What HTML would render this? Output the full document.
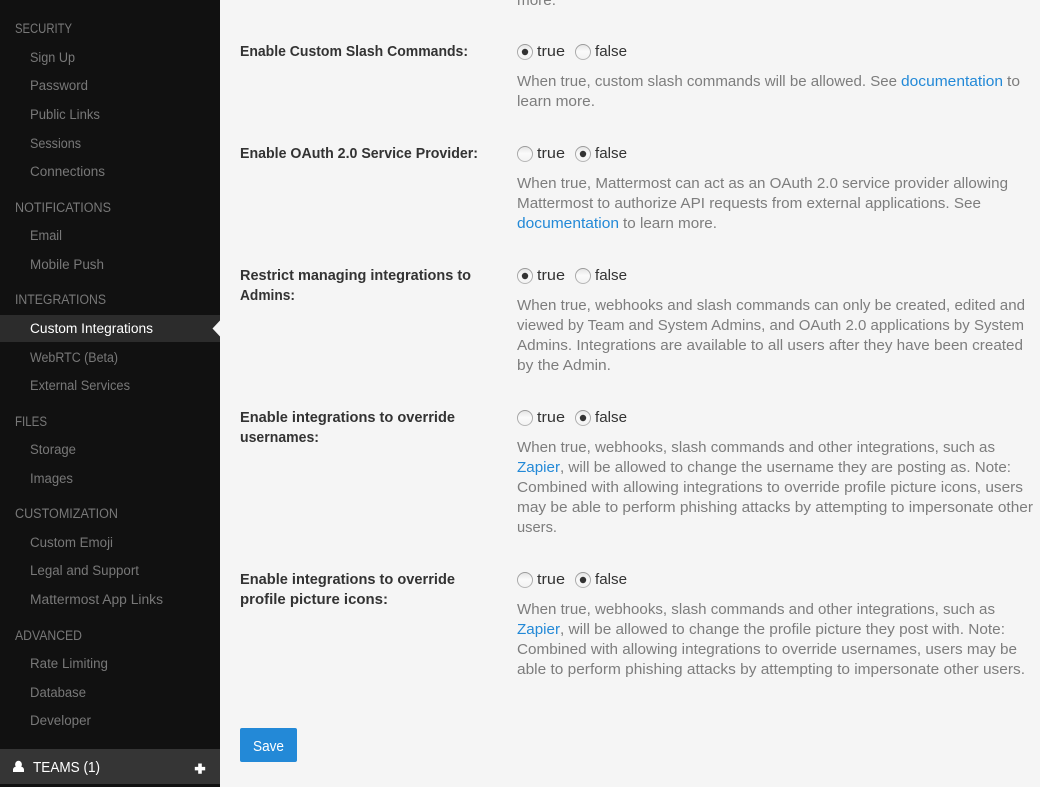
<!DOCTYPE html>
<html><head><meta charset="utf-8"><style>
html,body{margin:0;padding:0;width:1040px;height:787px;overflow:hidden;background:#f5f5f5}
svg{display:block}
text{font-family:"Liberation Sans",sans-serif;font-size:14.5px;white-space:pre}
.h{fill:#787878;font-size:13.5px}.i{fill:#787878;font-size:13.5px}
.l{fill:#333;font-weight:700;font-size:14.3px}.d{fill:#7d7d7d}.r{fill:#333;font-size:15px}.a{fill:#2389d7}
</style></head><body>
<svg width="1040" height="787" viewBox="0 0 1040 787" xmlns="http://www.w3.org/2000/svg">
<defs><linearGradient id="g" x1="0" y1="0" x2="0" y2="1"><stop offset="0" stop-color="#e4e4e4"/><stop offset=".45" stop-color="#fafafa"/><stop offset="1" stop-color="#f2f2f2"/></linearGradient>
<linearGradient id="s" x1="0" y1="0" x2="0" y2="1"><stop offset="0" stop-color="#9a9a9a"/><stop offset="1" stop-color="#b8b8b8"/></linearGradient></defs>
<rect width="1040" height="787" fill="#f5f5f5"/>
<rect width="220" height="787" fill="#111"/>
<rect y="315" width="220" height="27" fill="#2c2c2c"/>
<path d="M220 320.500L212.500 328.500L220 336.500Z" fill="#f5f5f5"/>
<rect y="749" width="220" height="35" fill="#353535"/>
<text class="h" lengthAdjust="spacingAndGlyphs" x="15" y="33" textLength="57">SECURITY</text>
<text class="i" lengthAdjust="spacingAndGlyphs" x="30" y="62" textLength="45">Sign Up</text>
<text class="i" lengthAdjust="spacingAndGlyphs" x="30" y="90" textLength="58">Password</text>
<text class="i" lengthAdjust="spacingAndGlyphs" x="30" y="119" textLength="70">Public Links</text>
<text class="i" lengthAdjust="spacingAndGlyphs" x="30" y="148" textLength="51">Sessions</text>
<text class="i" lengthAdjust="spacingAndGlyphs" x="30" y="176" textLength="75">Connections</text>
<text class="h" lengthAdjust="spacingAndGlyphs" x="15" y="212" textLength="96">NOTIFICATIONS</text>
<text class="i" lengthAdjust="spacingAndGlyphs" x="30" y="240" textLength="32">Email</text>
<text class="i" lengthAdjust="spacingAndGlyphs" x="30" y="269" textLength="74">Mobile Push</text>
<text class="h" lengthAdjust="spacingAndGlyphs" x="15" y="304" textLength="91">INTEGRATIONS</text>
<text class="i" lengthAdjust="spacingAndGlyphs" x="30" y="333" textLength="123" style="fill:#fff">Custom Integrations</text>
<text class="i" lengthAdjust="spacingAndGlyphs" x="30" y="362" textLength="88">WebRTC (Beta)</text>
<text class="i" lengthAdjust="spacingAndGlyphs" x="30" y="390" textLength="100">External Services</text>
<text class="h" lengthAdjust="spacingAndGlyphs" x="15" y="426" textLength="32">FILES</text>
<text class="i" lengthAdjust="spacingAndGlyphs" x="30" y="454" textLength="46">Storage</text>
<text class="i" lengthAdjust="spacingAndGlyphs" x="30" y="483" textLength="43">Images</text>
<text class="h" lengthAdjust="spacingAndGlyphs" x="15" y="518" textLength="103">CUSTOMIZATION</text>
<text class="i" lengthAdjust="spacingAndGlyphs" x="30" y="547" textLength="83">Custom Emoji</text>
<text class="i" lengthAdjust="spacingAndGlyphs" x="30" y="575" textLength="109">Legal and Support</text>
<text class="i" lengthAdjust="spacingAndGlyphs" x="30" y="604" textLength="133">Mattermost App Links</text>
<text class="h" lengthAdjust="spacingAndGlyphs" x="15" y="640" textLength="67">ADVANCED</text>
<text class="i" lengthAdjust="spacingAndGlyphs" x="30" y="668" textLength="78">Rate Limiting</text>
<text class="i" lengthAdjust="spacingAndGlyphs" x="30" y="697" textLength="56">Database</text>
<text class="i" lengthAdjust="spacingAndGlyphs" x="30" y="725" textLength="61">Developer</text>
<ellipse cx="18.500" cy="764.500" rx="3.400" ry="3.800" fill="#fff"/>
<path d="M13 772v-2.300c0-1.700 1.200-2.800 3.200-3.100 1.300 1 3.300 1 4.600 0 2 .3 3.200 1.400 3.200 3.100V772z" fill="#fff"/>
<text lengthAdjust="spacingAndGlyphs" x="33" y="772" textLength="67" style="fill:#fff;font-size:14.500px">TEAMS (1)</text>
<path d="M198.200 763.500h3.600v3.400h3.400v3.500h-3.400v3.400h-3.600v-3.400h-3.400v-3.500h3.400z" fill="#fff"/>

<text class="d" lengthAdjust="spacingAndGlyphs" x="517" y="5" textLength="39">more.</text>

<text class="l" lengthAdjust="spacingAndGlyphs" x="240" y="56" textLength="228">Enable Custom Slash Commands:</text>
<circle cx="525" cy="52" r="7.500" fill="url(#g)" stroke="url(#s)"/><circle cx="525" cy="52" r="3.200" fill="#333"/>
<text class="r" lengthAdjust="spacingAndGlyphs" x="537" y="56" textLength="28">true</text>
<circle cx="583" cy="52" r="7.500" fill="url(#g)" stroke="url(#s)"/>
<text class="r" lengthAdjust="spacingAndGlyphs" x="595" y="56" textLength="32">false</text>
<text class="d" lengthAdjust="spacingAndGlyphs" x="517" y="86" textLength="380">When true, custom slash commands will be allowed. See</text>
<text class="a" lengthAdjust="spacingAndGlyphs" x="901" y="86" textLength="102">documentation</text>
<text class="d" lengthAdjust="spacingAndGlyphs" x="1007" y="86" textLength="13">to</text>
<text class="d" lengthAdjust="spacingAndGlyphs" x="517" y="106" textLength="78">learn more.</text>

<text class="l" lengthAdjust="spacingAndGlyphs" x="240" y="158" textLength="238">Enable OAuth 2.0 Service Provider:</text>
<circle cx="525" cy="154" r="7.500" fill="url(#g)" stroke="url(#s)"/>
<text class="r" lengthAdjust="spacingAndGlyphs" x="537" y="158" textLength="28">true</text>
<circle cx="583" cy="154" r="7.500" fill="url(#g)" stroke="url(#s)"/><circle cx="583" cy="154" r="3.200" fill="#333"/>
<text class="r" lengthAdjust="spacingAndGlyphs" x="595" y="158" textLength="32">false</text>
<text class="d" lengthAdjust="spacingAndGlyphs" x="517" y="188" textLength="491">When true, Mattermost can act as an OAuth 2.0 service provider allowing</text>
<text class="d" lengthAdjust="spacingAndGlyphs" x="517" y="208" textLength="464">Mattermost to authorize API requests from external applications. See</text>
<text class="a" lengthAdjust="spacingAndGlyphs" x="517" y="228" textLength="102">documentation</text>
<text class="d" lengthAdjust="spacingAndGlyphs" x="623" y="228" textLength="94">to learn more.</text>

<text class="l" lengthAdjust="spacingAndGlyphs" x="240" y="280" textLength="231">Restrict managing integrations to</text>
<text class="l" lengthAdjust="spacingAndGlyphs" x="240" y="300" textLength="55">Admins:</text>
<circle cx="525" cy="276" r="7.500" fill="url(#g)" stroke="url(#s)"/><circle cx="525" cy="276" r="3.200" fill="#333"/>
<text class="r" lengthAdjust="spacingAndGlyphs" x="537" y="280" textLength="28">true</text>
<circle cx="583" cy="276" r="7.500" fill="url(#g)" stroke="url(#s)"/>
<text class="r" lengthAdjust="spacingAndGlyphs" x="595" y="280" textLength="32">false</text>
<text class="d" lengthAdjust="spacingAndGlyphs" x="517" y="310" textLength="508">When true, webhooks and slash commands can only be created, edited and</text>
<text class="d" lengthAdjust="spacingAndGlyphs" x="517" y="330" textLength="507">viewed by Team and System Admins, and OAuth 2.0 applications by System</text>
<text class="d" lengthAdjust="spacingAndGlyphs" x="517" y="350" textLength="506">Admins. Integrations are available to all users after they have been created</text>
<text class="d" lengthAdjust="spacingAndGlyphs" x="517" y="370" textLength="94">by the Admin.</text>

<text class="l" lengthAdjust="spacingAndGlyphs" x="240" y="422" textLength="215">Enable integrations to override</text>
<text class="l" lengthAdjust="spacingAndGlyphs" x="240" y="442" textLength="79">usernames:</text>
<circle cx="525" cy="418" r="7.500" fill="url(#g)" stroke="url(#s)"/>
<text class="r" lengthAdjust="spacingAndGlyphs" x="537" y="422" textLength="28">true</text>
<circle cx="583" cy="418" r="7.500" fill="url(#g)" stroke="url(#s)"/><circle cx="583" cy="418" r="3.200" fill="#333"/>
<text class="r" lengthAdjust="spacingAndGlyphs" x="595" y="422" textLength="32">false</text>
<text class="d" lengthAdjust="spacingAndGlyphs" x="517" y="452" textLength="478">When true, webhooks, slash commands and other integrations, such as</text>
<text class="a" lengthAdjust="spacingAndGlyphs" x="517" y="472" textLength="43">Zapier</text>
<text class="d" lengthAdjust="spacingAndGlyphs" x="560" y="472" textLength="451">, will be allowed to change the username they are posting as. Note:</text>
<text class="d" lengthAdjust="spacingAndGlyphs" x="517" y="492" textLength="506">Combined with allowing integrations to override profile picture icons, users</text>
<text class="d" lengthAdjust="spacingAndGlyphs" x="517" y="512" textLength="516">may be able to perform phishing attacks by attempting to impersonate other</text>
<text class="d" lengthAdjust="spacingAndGlyphs" x="517" y="532" textLength="40">users.</text>

<text class="l" lengthAdjust="spacingAndGlyphs" x="240" y="584" textLength="215">Enable integrations to override</text>
<text class="l" lengthAdjust="spacingAndGlyphs" x="240" y="604" textLength="148">profile picture icons:</text>
<circle cx="525" cy="580" r="7.500" fill="url(#g)" stroke="url(#s)"/>
<text class="r" lengthAdjust="spacingAndGlyphs" x="537" y="584" textLength="28">true</text>
<circle cx="583" cy="580" r="7.500" fill="url(#g)" stroke="url(#s)"/><circle cx="583" cy="580" r="3.200" fill="#333"/>
<text class="r" lengthAdjust="spacingAndGlyphs" x="595" y="584" textLength="32">false</text>
<text class="d" lengthAdjust="spacingAndGlyphs" x="517" y="614" textLength="478">When true, webhooks, slash commands and other integrations, such as</text>
<text class="a" lengthAdjust="spacingAndGlyphs" x="517" y="634" textLength="43">Zapier</text>
<text class="d" lengthAdjust="spacingAndGlyphs" x="560" y="634" textLength="445">, will be allowed to change the profile picture they post with. Note:</text>
<text class="d" lengthAdjust="spacingAndGlyphs" x="517" y="654" textLength="500">Combined with allowing integrations to override usernames, users may be</text>
<text class="d" lengthAdjust="spacingAndGlyphs" x="517" y="674" textLength="508">able to perform phishing attacks by attempting to impersonate other users.</text>

<rect x="240" y="728" width="57" height="34" rx="2" fill="#2389d7"/>
<text lengthAdjust="spacingAndGlyphs" x="253" y="751" textLength="31" style="fill:#fff;font-size:14.500px">Save</text>
</svg>
</body></html>
